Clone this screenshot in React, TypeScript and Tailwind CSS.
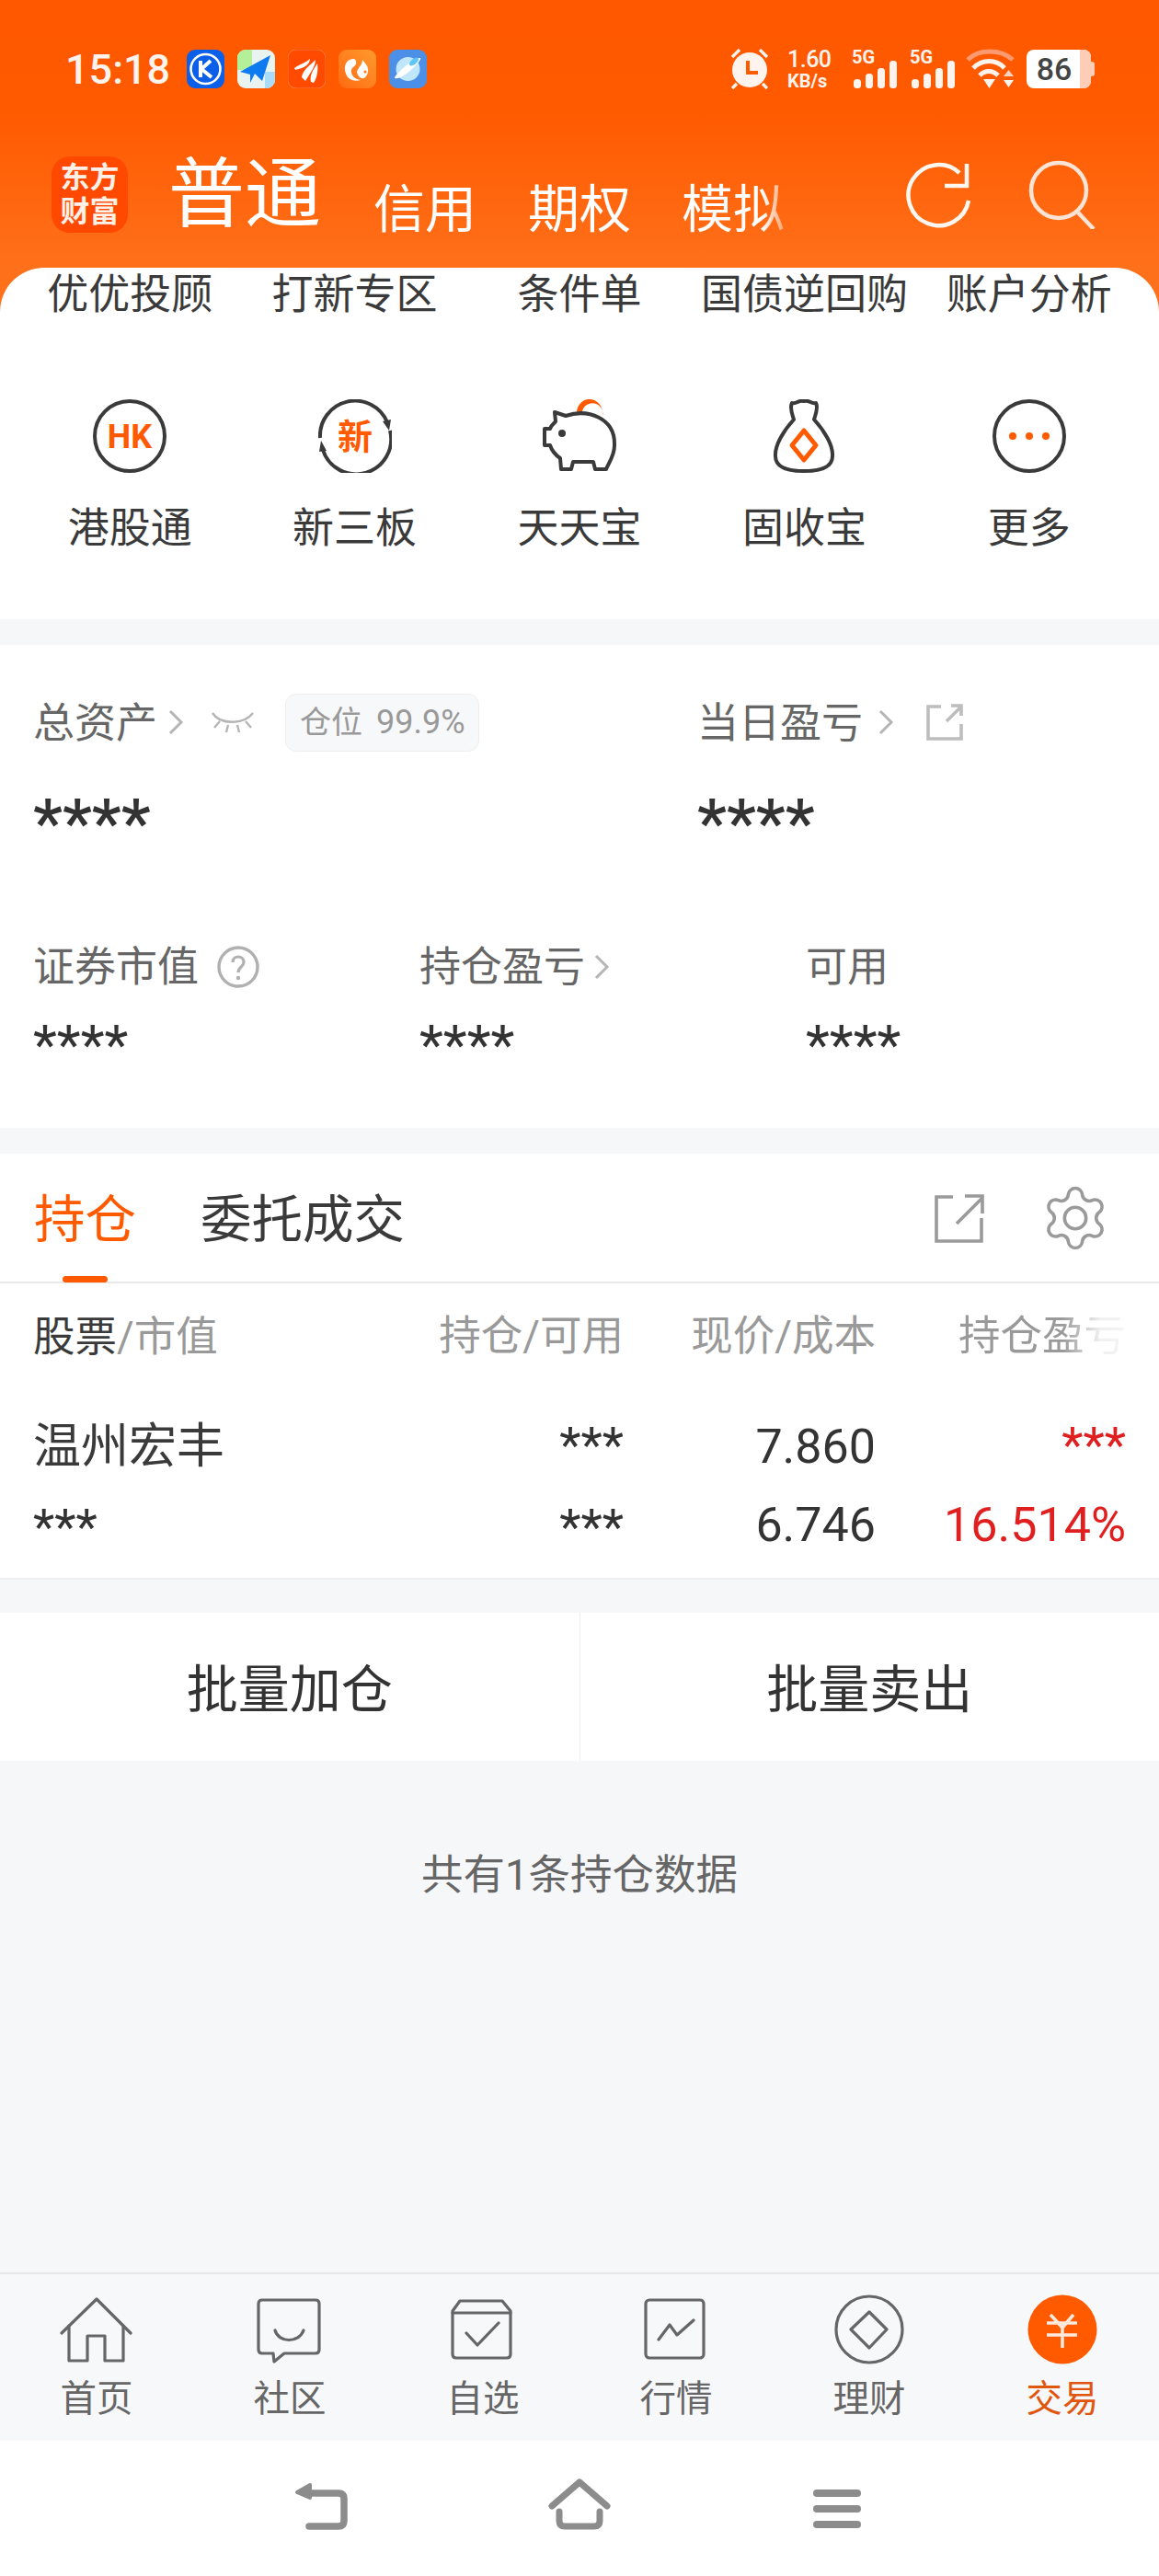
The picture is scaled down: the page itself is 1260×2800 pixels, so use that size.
import React from "react";

const sans = "font-['Roboto','Noto_Sans_CJK_SC',sans-serif]";

function Chevron({ cls = "" }: { cls?: string }) {
  return (
    <svg viewBox="0 0 18 28" className={"w-[18px] h-[28px] " + cls} fill="none" stroke="#b5b5b5" strokeWidth="3">
      <path d="M3 2 L15 14 L3 26" />
    </svg>
  );
}

function AppIcons() {
  return (
    <div className="flex gap-[14px] ml-[18px]">
      <svg width="41" height="42" viewBox="0 0 41 42">
        <rect x="0" y="0" width="41" height="42" rx="9" fill="#0b5fe8" />
        <circle cx="20.5" cy="21" r="16" fill="none" stroke="#fff" strokeWidth="2.6" />
        <path d="M15 12 V30 M26 12 L16 21 L27 30" fill="none" stroke="#fff" strokeWidth="4" />
      </svg>
      <svg width="41" height="42" viewBox="0 0 41 42">
        <defs>
          <clipPath id="mapc"><rect width="41" height="42" rx="9" /></clipPath>
        </defs>
        <g clipPath="url(#mapc)">
          <rect width="41" height="42" fill="#e9f3ef" />
          <rect width="16" height="22" fill="#b4f09a" />
          <rect x="30" y="24" width="11" height="18" fill="#a8dcf8" />
          <path d="M3 24 L36 6 L27 34 L19 26 L14 36 L14 27 Z" fill="#0f7bf0" />
        </g>
      </svg>
      <svg width="41" height="42" viewBox="0 0 41 42">
        <rect width="41" height="42" rx="9" fill="#ff4a00" stroke="#ff7a44" />
        <path d="M7 20 C14 15 20 14 24 10 C24 15 19 20 8 22 Z M15 30 C16 22 24 17 30 11 C30 18 25 24 19 34 Z M25 35 C23 28 28 21 32 15 C33 22 32 30 28 36 Z" fill="#fff" />
      </svg>
      <svg width="41" height="42" viewBox="0 0 41 42">
        <defs>
          <linearGradient id="ucg" x1="1" y1="0" x2="0" y2="1">
            <stop offset="0" stopColor="#ff9a2e" />
            <stop offset="1" stopColor="#ff6a12" />
          </linearGradient>
        </defs>
        <rect width="41" height="42" rx="9" fill="url(#ucg)" />
        <path d="M16 10 C8 10 5 19 8 26 C10 33 18 35 24 33 C18 32 13 28 14 22 C15 18 20 18 19 13 C19 11 18 10 16 10 Z" fill="#fff" />
        <path d="M20 24 C22 18 26 17 26 11 L30 16 C33 20 33 26 29 30 C26 33 21 30 20 24 Z" fill="#fff" />
        <circle cx="29" cy="24" r="1.6" fill="#ff7a1a" />
      </svg>
      <svg width="41" height="42" viewBox="0 0 41 42">
        <rect width="41" height="42" rx="9" fill="#4c8fe6" />
        <circle cx="20.5" cy="21" r="13" fill="#bfe6fb" />
        <path d="M6 31 C5 28 27 8 34 9 C37 11 14 34 6 31 Z" fill="#fff" />
        <ellipse cx="27" cy="13" rx="6" ry="3" fill="#5ec5f5" transform="rotate(-40 27 13)" />
      </svg>
    </div>
  );
}

function Bars({ cls = "" }: { cls?: string }) {
  return (
    <svg width="48" height="30" viewBox="0 0 48 30" className={cls}>
      <rect x="0" y="20" width="8" height="10" rx="3.5" fill="#fff3ee" />
      <rect x="13" y="14" width="8" height="16" rx="3.5" fill="#fff3ee" />
      <rect x="26" y="8" width="8" height="22" rx="3.5" fill="#fff3ee" />
      <rect x="39" y="0" width="8" height="30" rx="3.5" fill="#fff3ee" />
    </svg>
  );
}

function StatusRight() {
  return (
    <div className="ml-auto flex items-center h-[42px] mr-[70px] text-[#fff3ee]">
      <svg width="44" height="44" viewBox="0 0 44 44" fill="none">
        <path d="M3 9 L11 1 M41 9 L33 1 M8 38 L3 43 M36 38 L41 43" stroke="#fff3ee" strokeWidth="3.4" />
        <circle cx="22" cy="23" r="19" fill="#fff3ee" />
        <path d="M20 13 V26 H31" stroke="#ff5a00" strokeWidth="4" />
      </svg>
      <div className="ml-[19px] w-[52px] flex flex-col items-start font-['Roboto',sans-serif] font-medium">
        <span className="text-[25px] leading-[24px] tracking-[-0.5px]">1.60</span>
        <span className="text-[20px] leading-[20px] mt-[1px] font-bold whitespace-nowrap">KB/s</span>
      </div>
      <div className="ml-[20px] flex flex-col w-[48px] h-[42px] relative">
        <span className="font-['Roboto',sans-serif] font-bold text-[20px] leading-[16px] -ml-[2px]">5G</span>
        <Bars cls="absolute left-0 bottom-0" />
      </div>
      <div className="ml-[15px] flex flex-col w-[48px] h-[42px] relative">
        <span className="font-['Roboto',sans-serif] font-bold text-[20px] leading-[16px] -ml-[2px]">5G</span>
        <Bars cls="absolute left-0 bottom-0" />
      </div>
      <svg width="54" height="44" viewBox="0 0 54 44" fill="none" className="ml-[11px]">
        <path d="M2 12 C14 0 38 0 51 12" stroke="#ff9a70" strokeWidth="5" />
        <path d="M8 21 C18 11 33 11 42 21" stroke="#fff3ee" strokeWidth="5" />
        <path d="M15 29 C21 23 29 23 35 29" stroke="#fff3ee" strokeWidth="5" />
        <path d="M19 33 H32 L25.5 43 Z" fill="#fff3ee" />
        <path d="M41 30 L46.5 23 L52 30 Z" fill="#ffd3bf" />
        <path d="M41 34 H52 L46.5 42 Z" fill="#fff3ee" />
      </svg>
      <div className="ml-[12px] flex items-center">
        <div className="w-[70px] h-[42px] rounded-[8px] bg-white flex overflow-hidden">
          <div className="w-[58px] flex items-center justify-center font-['Roboto',sans-serif] font-medium text-[34px] leading-none text-[#444] pl-[2px]">86</div>
          <div className="flex-1 bg-[#ffcdb5]"></div>
        </div>
        <div className="w-[4px] h-[16px] bg-[#ffcdb5] rounded-r-[3px]"></div>
      </div>
    </div>
  );
}

function Header() {
  return (
    <div className="h-[341px] bg-[linear-gradient(180deg,#ff5800_0,#ff5a00_120px,#ff701a_291px)] pt-[54px]">
      <div className="flex items-center h-[42px] pl-[71px]">
        <span className="font-['Roboto',sans-serif] font-medium text-[45px] leading-none text-[#fff3ee]">15:18</span>
        <AppIcons />
        <StatusRight />
      </div>
      <div className={"flex items-end h-[83px] mt-[74px] pl-[56px] text-white " + sans}>
        <div className="w-[83px] h-[83px] rounded-[20px] bg-[#ff4800] flex flex-col items-center justify-center text-[#fff0e8] font-bold text-[32px] leading-[37px]">
          <span>东方</span>
          <span>财富</span>
        </div>
        <span className="ml-[44px] text-[83px] leading-[96px] -mb-[7px]">普通</span>
        <span className="ml-[57px] text-[56px] leading-[64px] -mb-[7px]">信用</span>
        <span className="ml-[56px] text-[56px] leading-[64px] -mb-[7px]">期权</span>
        <span className="ml-[55px] text-[56px] leading-[64px] -mb-[7px] bg-[linear-gradient(90deg,#fff_0,#fff_78%,#ffa878_98%)] bg-clip-text text-transparent">模拟</span>
        <svg width="76" height="76" viewBox="0 0 76 76" fill="none" stroke="#fff6f0" strokeWidth="4.5" className="ml-[130px] mb-[3px]">
          <path d="M70 44 A33 33 0 1 1 60 14" />
          <path d="M68 4 V28 H44" />
        </svg>
        <svg width="76" height="76" viewBox="0 0 76 76" fill="none" stroke="#ffe3d4" strokeWidth="4.5" className="ml-[58px] mb-[4px]">
          <circle cx="34" cy="34" r="30" />
          <path d="M55 58 L72 76" />
        </svg>
      </div>
    </div>
  );
}

function QuickIcon({ kind }: { kind: string }) {
  const s = "#3a3a3a";
  const o = "#ff5a00";
  if (kind === "hk")
    return (
      <svg width="80" height="80" viewBox="0 0 80 80" fill="none">
        <circle cx="40" cy="40" r="38" stroke={s} strokeWidth="4" />
        <text x="40" y="53" textAnchor="middle" fontFamily="Roboto, sans-serif" fontWeight="700" fontSize="36" fill={o}>HK</text>
      </svg>
    );
  if (kind === "new")
    return (
      <svg width="80" height="80" viewBox="0 0 80 80" fill="none">
        <path d="M2 42 A38 38 0 0 1 75 25" stroke={s} strokeWidth="4" />
        <path d="M78 34 A38 38 0 0 1 5 55" stroke={s} strokeWidth="4" />
        <path d="M70 24 L79 22 L77 34 Z M1 57 L9 56 L3 45 Z" fill={s} />
        <text x="40" y="54" textAnchor="middle" fontFamily="Noto Sans CJK SC, sans-serif" fontWeight="700" fontSize="38" fill={o}>新</text>
      </svg>
    );
  if (kind === "pig")
    return (
      <svg width="82" height="80" viewBox="0 0 82 80" fill="none">
        <path d="M38 16 A13 14 0 0 1 66 14 L66 18 A10 10 0 0 0 44 13" fill={o} />
        <path d="M14 14 L26 18 C50 10 80 20 79 50 C79 62 72 70 70 76 H58 L56 68 H34 L32 76 H21 L20 64 C14 60 11 56 9 50 H3 V32 H9 C10 28 14 26 15 24 Z" stroke={s} strokeWidth="4" strokeLinejoin="round" />
        <circle cx="22" cy="37" r="4" fill={s} />
      </svg>
    );
  if (kind === "bag")
    return (
      <svg width="80" height="80" viewBox="0 0 80 80" fill="none">
        <path d="M27 4 C32 6 34 0 40 2 C46 0 48 6 53 4 C56 10 52 18 51 22 C62 34 72 50 71 62 C71 72 62 78 40 78 C18 78 9 72 9 62 C8 50 18 34 29 22 C28 18 24 10 27 4 Z" stroke={s} strokeWidth="4" strokeLinejoin="round" />
        <path d="M40 34 L53 50 L40 66 L27 50 Z" stroke={o} strokeWidth="5" strokeLinejoin="round" />
      </svg>
    );
  return (
    <svg width="80" height="80" viewBox="0 0 80 80" fill="none">
      <circle cx="40" cy="40" r="38" stroke={s} strokeWidth="4" />
      <circle cx="22" cy="40" r="4" fill={o} />
      <circle cx="40" cy="40" r="4" fill={o} />
      <circle cx="58" cy="40" r="4" fill={o} />
    </svg>
  );
}

function QuickGrid() {
  const top = ["优优投顾", "打新专区", "条件单", "国债逆回购", "账户分析"];
  const items: [string, string][] = [
    ["hk", "港股通"],
    ["new", "新三板"],
    ["pig", "天天宝"],
    ["bag", "固收宝"],
    ["more", "更多"],
  ];
  return (
    <div className={"relative -mt-[50px] h-[382px] bg-white rounded-t-[48px] px-[19px] " + sans}>
      <div className="grid grid-cols-5 h-[58px] items-center text-[45px] leading-[60px] text-[#3a3a3a] text-center">
        {top.map((t) => (
          <span key={t} className="whitespace-nowrap">{t}</span>
        ))}
      </div>
      <div className="grid grid-cols-5 mt-[85px]">
        {items.map(([k, t]) => (
          <div key={k} className="flex flex-col items-center">
            <div className="h-[80px] flex justify-center"><QuickIcon kind={k} /></div>
            <span className="mt-[31px] text-[45px] leading-[60px] text-[#3a3a3a]">{t}</span>
          </div>
        ))}
      </div>
    </div>
  );
}

function Assets() {
  return (
    <div className={"h-[525px] bg-white pl-[36px] " + sans}>
      <div className="grid grid-cols-[722px_1fr] pt-[54px]">
        <div className="flex items-center h-[60px] text-[45px] text-[#666]">
          <span className="leading-[62px] pt-[3px]">总资产</span>
          <Chevron cls="ml-[11px]" />
          <svg width="48" height="24" viewBox="0 0 48 24" fill="none" stroke="#b5b5b5" strokeWidth="2.4" className="ml-[29px]">
            <path d="M2 2 C10 15 36 15 46 2 M10 11 L4 18 M19 15 L17 23 M29 15 L31 23 M38 11 L44 18" />
          </svg>
          <div className="ml-[33px] w-[211px] h-[63px] rounded-[12px] bg-[#f7f8fa] border border-[#eeeeee] flex items-center pl-[15px] text-[34px] leading-none text-[#999]">
            <span>仓位</span>
            <span className="ml-[15px] text-[36px] font-['Roboto',sans-serif]">99.9%</span>
          </div>
        </div>
        <div className="flex items-center h-[60px] text-[45px] text-[#666]">
          <span className="leading-[62px] pt-[3px]">当日盈亏</span>
          <Chevron cls="ml-[16px]" />
          <svg width="40" height="40" viewBox="0 0 40 40" fill="none" stroke="#bdbdbd" strokeWidth="3.6" className="ml-[35px]">
            <path d="M16 3 H2 V38 H38 V22 M22 19 L38 3 M27 2 H38 V13" />
          </svg>
        </div>
      </div>
      <div className="grid grid-cols-[722px_1fr] mt-[46px] font-['Roboto',sans-serif] font-medium text-[72px] leading-[70px] text-[#333] h-[70px]">
        <span>****</span>
        <span>****</span>
      </div>
      <div className="grid grid-cols-[420px_420px_1fr] mt-[90px] text-[45px] text-[#666]">
        <div className="flex items-center h-[60px]">
          <span className="leading-[62px] pt-[2px]">证券市值</span>
          <svg width="46" height="46" viewBox="0 0 46 46" fill="none" className="ml-[20px]">
            <circle cx="23" cy="23" r="21" stroke="#b0b0b0" strokeWidth="3.4" />
            <path d="M17 18 C17 10 29 10 29 18 C29 23 23 23 23 29" stroke="#b0b0b0" strokeWidth="3.2" />
            <circle cx="23" cy="35" r="2.2" fill="#b0b0b0" />
          </svg>
        </div>
        <div className="flex items-center h-[60px]">
          <span className="leading-[62px] pt-[2px]">持仓盈亏</span>
          <Chevron cls="ml-[9px]" />
        </div>
        <div className="flex items-center h-[60px]">
          <span className="leading-[62px] pt-[2px]">可用</span>
        </div>
      </div>
      <div className="grid grid-cols-[420px_420px_1fr] mt-[27px] font-['Roboto',sans-serif] text-[60px] leading-[56px] text-[#333] h-[56px]">
        <span>****</span>
        <span>****</span>
        <span>****</span>
      </div>
    </div>
  );
}

function Holdings() {
  return (
    <div className={"bg-white " + sans}>
      <div className="h-[141px] border-b-2 border-[#e8e8e8] pl-[37px] pr-[52px] flex">
        <div className="flex flex-col items-center w-[111px] h-[140px] pt-[42px]">
          <span className="text-[55.5px] leading-[62px] text-[#ff5a00]">持仓</span>
          <div className="mt-[29px] w-[49px] h-[7px] rounded-[4px] bg-[#ff5a00]"></div>
        </div>
        <span className="ml-[70px] mt-[42px] text-[55.5px] leading-[62px] text-[#3a3a3a]">委托成交</span>
        <svg width="54" height="54" viewBox="0 0 54 54" fill="none" stroke="#9a9a9a" strokeWidth="3.6" className="ml-auto mt-[44px]">
          <path d="M20 3 H2 V51 H51 V26 M24 32 L52 4 M33 2 H52 V21" />
        </svg>
        <svg width="78" height="78" viewBox="0 0 24 24" fill="none" stroke="#9a9a9a" strokeWidth="1.1" className="ml-[60px] mt-[31px]">
          <path d="M9.671 4.136a2.34 2.34 0 0 1 4.659 0 2.34 2.34 0 0 0 3.319 1.915 2.34 2.34 0 0 1 2.33 4.033 2.34 2.34 0 0 0 0 3.831 2.34 2.34 0 0 1-2.33 4.033 2.34 2.34 0 0 0-3.319 1.915 2.34 2.34 0 0 1-4.659 0 2.34 2.34 0 0 0-3.32-1.915 2.34 2.34 0 0 1-2.33-4.033 2.34 2.34 0 0 0 0-3.831A2.34 2.34 0 0 1 6.35 6.051a2.34 2.34 0 0 0 3.319-1.915" />
          <circle cx="12" cy="12" r="3.6" />
        </svg>
      </div>
      <div className="grid grid-cols-[1fr_300px_274px_272px] pl-[36px] pr-[36px] h-[322px] border-b-2 border-[#efefef] content-start">
        <div className="col-span-1 h-[114px] flex items-center text-[45.5px] leading-none pt-[3px]">
          <span className="text-[#3a3a3a]">股票</span>
          <span className="text-[#999]">/市值</span>
        </div>
        <div className="h-[114px] flex items-center justify-end text-[45.5px] text-[#999] pt-[2px]">持仓/可用</div>
        <div className="h-[114px] flex items-center justify-end text-[45.5px] text-[#999] pt-[2px]">现价/成本</div>
        <div className="h-[114px] flex items-center justify-end text-[45.5px] pt-[2px]">
          <span className="bg-[linear-gradient(90deg,#999_0,#999_62%,#f0f0f0_85%,#f4f4f4_100%)] bg-clip-text text-transparent">持仓盈亏</span>
        </div>

        <div className="h-[62px] mt-[32px] flex items-center text-[52px] text-[#3a3a3a] pt-[2px]">温州宏丰</div>
        <div className="h-[62px] mt-[32px] flex items-start justify-end text-[54px] leading-[60px] text-[#333]">***</div>
        <div className="h-[62px] mt-[32px] flex items-center justify-end text-[52px] text-[#333] pt-[2px]">7.860</div>
        <div className="h-[62px] mt-[32px] flex items-start justify-end text-[54px] leading-[60px] text-[#e02020]">***</div>

        <div className="h-[62px] mt-[22px] flex items-start text-[54px] leading-[60px] text-[#333] pt-[5px]">***</div>
        <div className="h-[62px] mt-[22px] flex items-start justify-end text-[54px] leading-[60px] text-[#333] pt-[5px]">***</div>
        <div className="h-[62px] mt-[22px] flex items-center justify-end text-[52px] text-[#333] pt-[4px]">6.746</div>
        <div className="h-[62px] mt-[22px] flex items-center justify-end text-[52px] text-[#e02020] pt-[3px]">16.514%</div>
      </div>
    </div>
  );
}

function Actions() {
  return (
    <div className={"mt-[36px] h-[161px] bg-white flex text-[56px] text-[#333] " + sans}>
      <div className="flex-1 flex items-center justify-center border-r border-[#efefef] pt-[7px]">批量加仓</div>
      <div className="flex-1 flex items-center justify-center pt-[7px]">批量卖出</div>
    </div>
  );
}

function TabIcon({ kind }: { kind: string }) {
  const s = "#666";
  const common = { fill: "none", stroke: s, strokeWidth: 3.2, strokeLinejoin: "round" as const, strokeLinecap: "round" as const };
  if (kind === "home")
    return (
      <svg width="80" height="80" viewBox="0 0 80 80" {...common}>
        <path d="M2 44 L40 7 L77 44" />
        <path d="M10 36 V74 H30 V47 H49 V74 H69 V36" />
      </svg>
    );
  if (kind === "chat")
    return (
      <svg width="80" height="80" viewBox="0 0 80 80" {...common}>
        <path d="M10 8 H68 Q72 8 72 12 V62 Q72 66 68 66 H34 L23 75 L22 66 H10 Q6 66 6 62 V12 Q6 8 10 8 Z" />
        <path d="M24 41 C28 55 50 55 55 41" />
      </svg>
    );
  if (kind === "pick")
    return (
      <svg width="80" height="80" viewBox="0 0 80 80" {...common}>
        <path d="M7 20 L15 9 H61 L70 20 V67 Q70 71 66 71 H11 Q7 71 7 67 Z" />
        <path d="M7 22 H70" />
        <path d="M22 44 L34 57 L57 33" />
      </svg>
    );
  if (kind === "market")
    return (
      <svg width="80" height="80" viewBox="0 0 80 80" {...common}>
        <rect x="7" y="8" width="63" height="63" rx="4" />
        <path d="M21 51 L33 35 L41 46 L59 30" />
      </svg>
    );
  if (kind === "finance")
    return (
      <svg width="80" height="80" viewBox="0 0 80 80" {...common}>
        <circle cx="40" cy="40" r="36" />
        <path d="M40 21 L59 40 L40 60 L20 40 Z" />
      </svg>
    );
  return (
    <svg width="80" height="80" viewBox="0 0 80 80" fill="none">
      <circle cx="40" cy="40" r="37.5" fill="#ff5a00" />
      <path d="M27 24 L40 38 L52 24 M23 33 H56 M23 46 H56 M40 38 V60" stroke="#ffe9dd" strokeWidth="3.6" />
    </svg>
  );
}

function TabBar() {
  const tabs: [string, string][] = [
    ["home", "首页"],
    ["chat", "社区"],
    ["pick", "自选"],
    ["market", "行情"],
    ["finance", "理财"],
    ["trade", "交易"],
  ];
  return (
    <div className={"h-[183px] border-t-2 border-[#e6e6e8] bg-[#f7f8fa] grid grid-cols-6 pt-[20px] " + sans}>
      {tabs.map(([k, t]) => (
        <div key={k} className="flex flex-col items-center">
          <TabIcon kind={k} />
          <span className={"mt-[13px] text-[39.5px] leading-[46px] " + (k === "trade" ? "text-[#e0560f]" : "text-[#666]")}>{t}</span>
        </div>
      ))}
    </div>
  );
}

function NavBar() {
  return (
    <div className="h-[147px] bg-white flex justify-center gap-[200px] pt-[37px]">
      <svg width="80" height="64" viewBox="0 0 80 64" fill="none" stroke="#8c8c8c" strokeWidth="7.5" strokeLinecap="round" strokeLinejoin="round">
        <path d="M22 20 H58 Q64 20 64 26 V50 Q64 56 58 56 H26" />
        <path d="M13 19 L27 11 V25 Z" fill="#8c8c8c" strokeWidth="4" />
      </svg>
      <svg width="80" height="64" viewBox="0 0 80 64" fill="none" stroke="#8c8c8c" strokeWidth="7" strokeLinecap="round" strokeLinejoin="round">
        <path d="M10 34 L40 8 L70 34" />
        <path d="M18 40 V50 Q18 56 24 56 H56 Q62 56 62 50 V40" />
      </svg>
      <svg width="80" height="64" viewBox="0 0 80 64" fill="#8c8c8c">
        <rect x="14" y="16" width="52" height="8" rx="4" />
        <rect x="14" y="33" width="52" height="8" rx="4" />
        <rect x="14" y="50" width="52" height="8" rx="4" />
      </svg>
    </div>
  );
}

export default function App() {
  return (
    <div className="w-[1260px] h-[2800px] bg-[#f6f7f9] flex flex-col overflow-hidden">
      <Header />
      <QuickGrid />
      <div className="h-[28px]"></div>
      <Assets />
      <div className="h-[28px]"></div>
      <Holdings />
      <Actions />
      <div className={"flex-1 flex justify-center pt-[95px] text-[45.5px] leading-[60px] text-[#666] " + sans}>共有1条持仓数据</div>
      <TabBar />
      <NavBar />
    </div>
  );
}
